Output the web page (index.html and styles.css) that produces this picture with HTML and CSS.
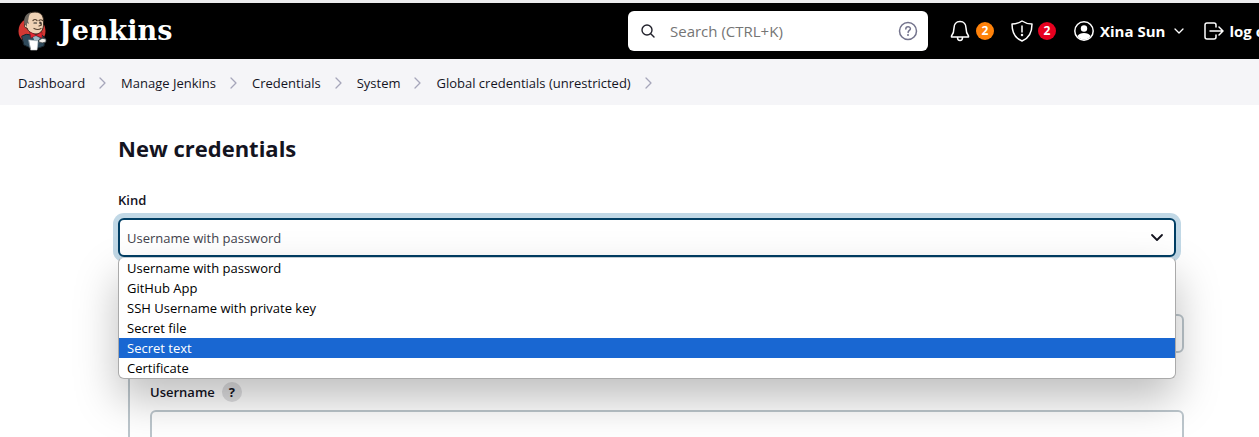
FILE: index.html
```html
<!DOCTYPE html>
<html lang="en">
<head>
<meta charset="utf-8">
<title>New credentials - Jenkins</title>
<link rel="stylesheet" href="styles.css">
</head>
<body>
<header class="header">
  <a class="brand" href="#">
    <svg class="brand-logo" viewBox="0 0 30 40" aria-hidden="true">
      <circle cx="14" cy="20" r="13.500" fill="#d33833"/>
      <path d="M4 25 Q8 22 13 24 L21 23 Q26 24 27 28 L26 35 Q16 40 6 34 Z" fill="#2f4a5b" stroke="#17242c"/>
      <path d="M7 13 C6 5 11 1 17 1 C24 1 26 6 25.500 12 C26 18 23 23 18 23 C13 23 10 20 9 17 C6 17 6 14 7 13Z" fill="#efd2b5" stroke="#33281f"/>
      <path d="M6.500 13 C5 6 9 2 13 1.500 C10 5 11 8 10 10 L11 13 L9 12 L9 16 Z" fill="#6b665f"/>
      <path d="M15 9.500q2-2 4 0M21 9.500q2-1.500 3.500 0M22 11l1.500 3-2.500 1M16 17.500q4 2 7 0" fill="none" stroke="#54402f" stroke-width="1.200"/>
      <path d="M16 12h2.500M21.500 12h2" stroke="#222" stroke-width="1.200"/>
      <path d="M12 21 L18 24 L24 21 L24 27 L18 24.500 L13 27Z" fill="#e32633" stroke="#811b20" stroke-width=".6"/>
      <path d="M15 26l3-1 4 2-2 3-4-1z" fill="#9fb9c5"/>
      <path d="M11 29 L20 30 L19 39 L13 39Z" fill="#fff" stroke="#ccd2d5" stroke-width=".6"/>
      <path d="M21 29 Q24 26 28 28 L28 31 Q24 33 21 31Z" fill="#f3eee9" stroke="#2f3638" stroke-width=".8"/>
    </svg>
    <span class="brand-name">Jenkins</span>
  </a>
  <div class="search">
    <svg class="search-icon" viewBox="0 0 16 16" aria-hidden="true"><circle cx="7" cy="7" r="5" /><path d="M11 11l3 3"/></svg>
    <input class="search-input" type="search" placeholder="Search (CTRL+K)" aria-label="Search">
    <a class="search-help" href="#" aria-label="Search help"><svg viewBox="0 0 20 20"><circle cx="10" cy="10" r="8.500"/><path d="M7.800 8c0-3 4.600-2.800 4.600-.3 0 1.700-2.200 1.700-2.300 3.700"/><circle class="dot" cx="10" cy="14" r="1"/></svg></a>
  </div>
  <nav class="account" aria-label="Account">
    <a class="notice" href="#" aria-label="Notifications">
      <svg class="icon" viewBox="0 0 22 22"><path d="M11 1.500c-4 0-6 3-6 6.500 0 4-1 6-2.500 8v1h17v-1C18 14 17 12 17 8c0-3.500-2-6.500-6-6.500zM8.500 17.500c0 4 5 4 5 0"/></svg>
      <span class="badge badge-orange">2</span>
    </a>
    <a class="notice" href="#" aria-label="Security warnings">
      <svg class="icon" viewBox="0 0 22 22"><path d="M11 1C8 3 5 4 1 4c0 8 2 14 10 17 8-3 10-9 10-17-4 0-7-1-10-3zM11 6v6"/><circle cx="11" cy="15" r=".5"/></svg>
      <span class="badge badge-red">2</span>
    </a>
    <a class="user" href="#">
      <svg class="icon" viewBox="0 0 22 22"><circle cx="11" cy="11" r="9.200"/><circle class="solid" cx="11" cy="8.500" r="3.200"/><path class="solid" d="M4.500 16c2-4 11-4 13 0-3 5-10 5-13 0z"/></svg>
      <span>Xina Sun</span>
      <svg class="caret" viewBox="0 0 12 12" aria-hidden="true"><path d="M2 4l4 4 4-4"/></svg>
    </a>
    <a class="logout" href="#">
      <svg class="icon" viewBox="0 0 22 22"><path d="M14 7V5q0-2-2-2H5Q3 3 3 5v12q0 2 2 2h7q2 0 2-2v-2M8 11h12.500M17 7l4 4-4 4"/></svg>
      <span>log out</span>
    </a>
  </nav>
</header>
<nav class="breadcrumbs" aria-label="Breadcrumb">
  <a href="#">Dashboard</a><svg class="sep" viewBox="0 0 8 12"><path d="M1 1l5 5-5 5"/></svg>
  <a href="#">Manage Jenkins</a><svg class="sep" viewBox="0 0 8 12"><path d="M1 1l5 5-5 5"/></svg>
  <a href="#">Credentials</a><svg class="sep" viewBox="0 0 8 12"><path d="M1 1l5 5-5 5"/></svg>
  <a href="#">System</a><svg class="sep" viewBox="0 0 8 12"><path d="M1 1l5 5-5 5"/></svg>
  <a href="#">Global credentials (unrestricted)</a><svg class="sep" viewBox="0 0 8 12"><path d="M1 1l5 5-5 5"/></svg>
</nav>
<main class="main">
  <h1 class="title">New credentials</h1>
  <form>
    <label class="label" for="kind">Kind</label>
    <div class="select-wrap">
      <select class="field kind" id="kind"><option>Username with password</option></select>
      <svg class="select-caret" viewBox="0 0 14 14" aria-hidden="true"><path d="M2 5l5 5 5-5"/></svg>
      <ul class="menu" role="listbox" aria-label="Kind">
        <li role="option">Username with password</li>
        <li role="option">GitHub App</li>
        <li role="option">SSH Username with private key</li>
        <li role="option">Secret file</li>
        <li class="active" role="option" aria-selected="true">Secret text</li>
        <li role="option">Certificate</li>
      </ul>
    </div>
    <div class="nested">
      <select class="field" aria-label="Scope"></select>
      <div class="label-row">
        <label for="username">Username</label>
        <button class="help" type="button" aria-label="Help for Username">?</button>
      </div>
      <input class="field" id="username" type="text">
    </div>
  </form>
</main>
</body>
</html>
```
FILE: styles.css
```css
* { box-sizing: border-box; }

body {
  margin: 0;
  overflow: hidden;
  background: #fff;
  color: #14141f;
  font: 13px/20px "Open Sans", "Noto Sans", sans-serif;
}

a { color: inherit; text-decoration: none; }
svg { fill: none; stroke: currentColor; stroke-linecap: round; stroke-linejoin: round; flex: none; }
input, select, button { font: inherit; color: inherit; }

.header {
  display: flex;
  align-items: center;
  height: 59px;
  padding-left: 18px;
  border-top: 3px solid #ececee;
  background: #000;
  color: #fff;
}

.brand { display: flex; align-items: center; gap: 11px; }
.brand-logo { width: 30px; height: 40px; stroke: none; }
.brand-name { font: bold 27px/36px "DejaVu Serif", serif; }

.search {
  display: flex;
  align-items: center;
  flex: 0 0 300px;
  height: 40px;
  margin-left: auto;
  padding: 0 10px 0 12px;
  border-radius: 6px;
  background: #fff;
}
.search-icon { width: 16px; height: 16px; color: #22222c; stroke-width: 1.4; }
.search-input {
  flex: 1;
  min-width: 0;
  padding: 0 14px;
  border: 0;
  outline: 0;
  background: none;
  color: #333;
  font-size: 15px;
}
.search-input::placeholder { color: #757575; opacity: 1; }
.search-help { display: flex; color: #73738c; }
.search-help svg { width: 20px; height: 20px; stroke-width: 1.5; }
.dot { fill: currentColor; stroke: none; }

.account {
  display: flex;
  align-items: center;
  flex: 0 0 331px;
  min-width: 0;
  padding-left: 21px;
  gap: 17px;
  font-size: 15px;
  font-weight: 700;
  white-space: nowrap;
}
.account a { display: flex; align-items: center; flex: none; gap: 5px; }
.icon { width: 22px; height: 22px; stroke-width: 1.5; }
.solid { fill: currentColor; stroke: none; }
.caret { width: 12px; height: 12px; margin-left: 3px; stroke-width: 1.3; }
.badge {
  width: 18px;
  height: 18px;
  border-radius: 50%;
  font-size: 12px;
  line-height: 18px;
  text-align: center;
}
.badge-orange { background: #ff820a; }
.badge-red { background: #e6001f; }

.breadcrumbs {
  display: flex;
  align-items: center;
  gap: 14px;
  height: 46px;
  padding: 2px 18px 0;
  background: #f5f5f8;
  font-weight: 500;
  white-space: nowrap;
}
.sep { width: 8px; height: 12px; color: #a6a6ba; stroke-width: 1.3; }

.main { padding: 27px 83px 0 118px; }
.title { margin: 0 0 26px; font-size: 22px; line-height: 32px; font-weight: 700; }
.label { display: block; margin-bottom: 8px; font-weight: 600; }

.field {
  display: block;
  width: 100%;
  height: 39px;
  padding: 0 8px;
  border: 2px solid #bcc6cc;
  border-radius: 6px;
  outline: 0;
  background: #fff;
  appearance: none;
}
.select-wrap { position: relative; }
.kind { padding: 0 7px; border-color: #003e64; box-shadow: 0 0 0 5px #c1d8e6; color: #42424c; }
.select-caret {
  position: absolute;
  top: 12px;
  right: 12px;
  width: 14px;
  height: 14px;
  stroke-width: 1.8;
  pointer-events: none;
}
.menu {
  position: absolute;
  top: 100%;
  left: 0;
  right: 0;
  margin: 0;
  padding: 0;
  list-style: none;
  overflow: hidden;
  border: 1px solid #aaa;
  border-top-color: #c4ccd2;
  border-radius: 6px;
  background: #fff;
  box-shadow: 0 20px 44px rgba(0, 0, 0, 0.26);
  color: #000;
}
.menu li { padding: 0 8px; }
.menu .active { background: #1967d2; color: #fff; }

.nested {
  margin: 20px -8px 0 10px;
  padding: 37px 0 20px 20px;
  border-left: 2px solid #bcc6cc;
}
.label-row { display: flex; align-items: center; gap: 7px; margin: 29px 0 8px; font-weight: 600; }
.help {
  width: 20px;
  height: 20px;
  padding: 0;
  border: 0;
  border-radius: 50%;
  background: #e0e0e2;
  font-weight: 700;
  line-height: 20px;
}
```
